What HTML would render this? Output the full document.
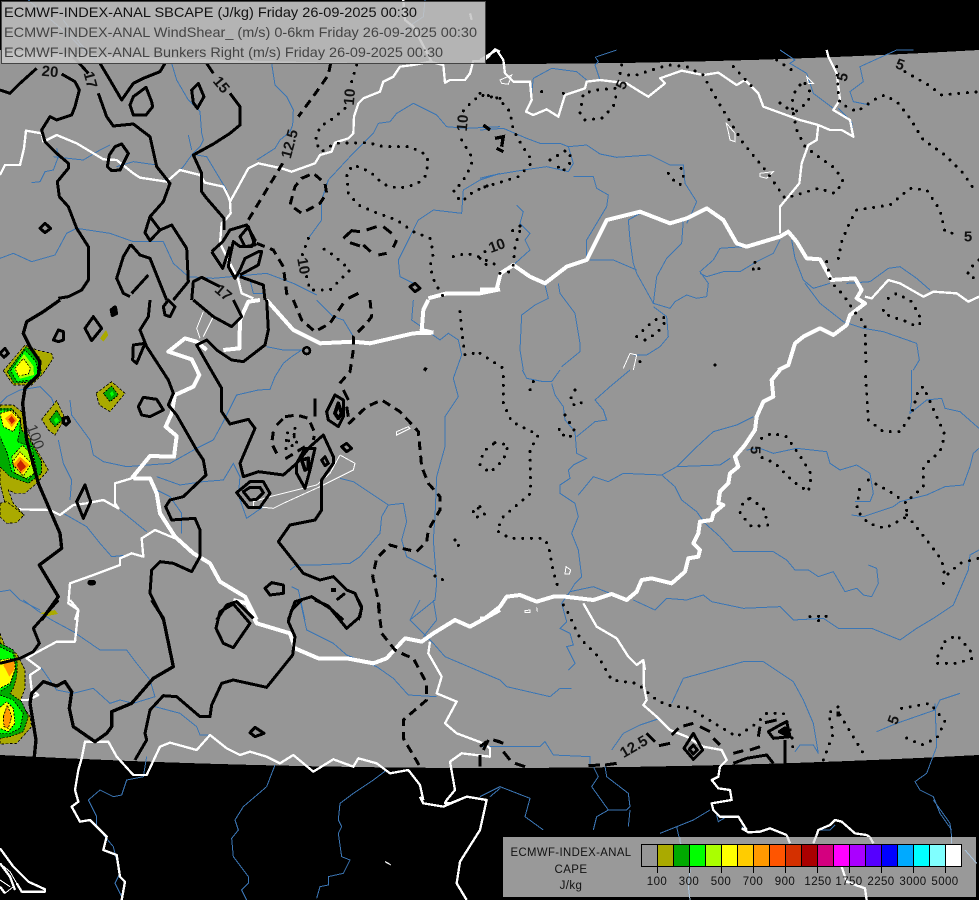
<!DOCTYPE html>
<html><head><meta charset="utf-8"><title>ECMWF CAPE</title>
<style>
html,body{margin:0;padding:0;background:#000;width:979px;height:900px;overflow:hidden}
svg{display:block;position:absolute;left:0;top:0}
path,polygon{fill:none}
.b path{stroke:#3b76b5;stroke-width:3}
.w path{stroke:#fff;stroke-width:7;stroke-linejoin:round}
.t path{stroke:#fff;stroke-width:12;stroke-linejoin:round}
.o path{stroke:#fff;stroke-width:3}
.k path{stroke:#000;stroke-width:9;stroke-linejoin:round}
.d path{stroke:#000;stroke-width:9;stroke-dasharray:26 17}
.p path{stroke:#000;stroke-width:9;stroke-linecap:round;stroke-dasharray:0 26}
.c path{stroke:#000;stroke-width:2.5;stroke-dasharray:6 4}
text{font-family:"Liberation Sans",sans-serif}
.l text{font-weight:bold;font-size:15px;fill:#111;text-anchor:middle;dominant-baseline:central}
</style></head><body>
<svg width="979" height="900" viewBox="0 0 979 900" shape-rendering="crispEdges">
<rect width="979" height="900" fill="#000"/>
<path d="M0,50Q490,78 979,50L979,755Q490,781 0,755Z" style="fill:#969696"/>

<g class="b">
<g transform="scale(.33333)">
<path d="M515,190L530,240 565,300 600,335 605,400 610,420 600,440 575,465 550,500 520,530"/>
<path d="M565,405L575,450"/>
<path d="M815,190L825,255 860,290 880,330 878,375 870,395 840,420 825,445 770,480"/>
<path d="M1500,380L1400,385 1340,380 1310,345 1240,310 1190,340 1170,365 1135,370 1120,400 1050,470 985,540 965,600 965,660 925,715"/>
<path d="M95,548L120,545 135,515 160,510 175,470 170,445"/>
<path d="M160,470L250,480 300,450 330,435"/>
<path d="M350,500L400,485 470,495 500,545"/>
<path d="M590,465L620,470 650,520 680,570"/>
<path d="M0,775L40,760 95,785 165,765 200,700 230,685 330,700 400,725 490,725 520,790 565,830 640,835 800,820 880,850 950,885"/>
<path d="M1500,520L1440,540 1390,570 1385,640 1300,630 1255,660 1230,710 1195,780 1200,830 1240,850"/>
<path d="M750,840L760,880 790,880"/>
<path d="M85,0L130,40 200,100 260,160M190,60L240,130 290,185M1275,0L1270,50 1240,70 1210,100"/>
</g>
<g transform="translate(0,300) scale(.33333)">
<path d="M210,300L215,345 270,420 280,465 310,485 380,500 510,490 590,445 640,420 670,365 710,285 775,270 810,268 825,230 850,190 875,170 905,150 850,150 800,140"/>
<path d="M0,310L20,290 60,270 120,260 155,295 175,345M175,420L190,490 215,540 210,600"/>
<path d="M190,640L260,680 300,730 335,770 385,765"/>
<path d="M0,875L30,870 60,900 120,930"/>
<path d="M360,630L440,695"/>
<path d="M470,530L540,555 610,545 670,540 700,490 720,530 715,585 740,655 790,620"/>
<path d="M1240,0L1235,60 1285,95 1320,120 1345,100 1375,120 1385,165 1360,235 1375,290 1335,350 1335,440 1310,530 1305,650 1300,720 1310,850 1305,900 1230,960"/>
<path d="M950,0L1000,50 1030,60 1060,110"/>
<path d="M1020,535L1060,545 1165,615 1145,650 1140,700 1080,770 1050,790 950,795 890,795 870,810"/>
<path d="M1165,615L1210,610 1220,665 1205,720 1220,770 1300,810"/>
<path d="M875,860L895,870 915,960"/>
<path d="M470,570L510,590 545,640 545,700"/>
</g>
<g transform="translate(480,50) scale(.33333)">
<path d="M155,130L160,85 215,55 290,65 320,90"/>
<path d="M345,20L355,35 345,45 360,90M350,20L410,0"/>
<path d="M900,0L945,30 930,40 980,70 1000,130 1060,175"/>
<path d="M1300,0L1250,0 1140,50 1150,95 1110,125 1120,155 1170,165"/>
<path d="M1075,175L1115,215 1120,255"/>
<path d="M0,385L40,375 130,360 200,350 265,365 280,340 265,290 320,285 360,312 410,322 510,315 570,345 610,345 615,400 650,455 635,490 620,520"/>
<path d="M0,240L70,235 140,265 180,280 240,280 265,290"/>
<path d="M280,380L340,380 350,415 385,435 380,470 320,570 320,630"/>
<path d="M110,465L130,485 120,520 150,550 135,570 150,600 100,645"/>
<path d="M610,510L605,580 560,625 530,680 520,760"/>
<path d="M480,490L445,510 450,570 460,640 470,670 520,760 570,775 585,755 620,735 650,745 680,740 685,700 660,665 700,630 720,595 790,590"/>
<path d="M330,630L400,630 470,660"/>
<path d="M900,570L880,610 830,635 780,665 730,665 680,680 660,670"/>
<path d="M935,570L945,625 970,690 1000,715 1050,700"/>
<path d="M975,700L1020,760 1090,815 1150,835 1210,845 1310,880 1318,930 1300,960"/>
<path d="M1100,700L1170,695 1225,655 1260,650 1310,685 1350,720"/>
<path d="M195,705L205,745 165,765 125,795 120,900 130,960"/>
<path d="M235,700L240,730 285,790 300,880 300,905 245,950"/>
<path d="M520,770L560,800 565,860 540,890 500,915 460,915"/>
</g>
<g transform="translate(480,370) scale(.33333)">
<path d="M127,0L140,25 190,35 215,35 240,0"/>
<path d="M215,40L225,75 250,110 255,150 285,185 290,250 320,265 280,285 265,300 270,325 240,345 240,370 285,400 295,440 275,490 295,540 305,620 285,640 270,665 245,700 260,755 240,775 270,790 280,825 260,830 285,880 265,900"/>
<path d="M450,0L390,50 345,90 370,120 380,150 345,155 290,200"/>
<path d="M295,375L340,320 385,335 430,310 545,315 585,350 605,390 650,425 675,460 720,500 760,545 880,545 920,570 945,600 985,600 1015,620 1060,605 1095,665 1130,655 1150,675 1175,680 1195,640 1190,595 1165,585"/>
<path d="M545,315L590,290 640,240 700,185 770,165 820,140"/>
<path d="M590,290L720,285 750,265"/>
<path d="M800,240L840,235 880,250 950,235 1040,245 1050,280 1080,300 1130,285 1170,310 1180,370 1170,395 1125,395"/>
<path d="M1295,0L1295,90 1290,130 1340,90 1385,85 1395,115 1440,125 1497,175"/>
<path d="M1115,435L1150,440 1240,410 1260,395 1340,375 1395,350 1450,345 1470,290 1480,250 1497,235"/>
<path d="M270,665L340,650 390,670"/>
<path d="M460,690L525,720 560,685 620,690 670,675 695,695 790,715 900,710 940,750 1030,745 1075,775 1175,775 1260,810 1310,775 1360,745 1420,705 1465,600 1470,555 1497,540"/>
</g>
<g transform="translate(0,600) scale(.33333)">
<path d="M70,0L110,30 155,60 220,95 300,150 380,150 410,190 450,240 465,290 400,310 360,300 330,310 280,265 220,280 170,270 125,205 85,225"/>
<path d="M465,320L540,340 590,380 600,405 630,405"/>
<path d="M900,0L920,90 1000,130 1040,165 1130,200 1180,235 1225,285 1310,290"/>
<path d="M1260,0L1230,60 1300,130 1335,170 1500,240M1300,0L1310,60 1270,110"/>
<path d="M440,470L430,530 380,540 365,585 340,590 300,570 265,600 290,650 290,680 340,740 360,820 345,850 365,890"/>
<path d="M825,495L800,560 730,620 705,660 715,690 695,715 700,770 745,830 745,850 725,870 740,900"/>
<path d="M1160,510L1120,540 1060,580 1020,610 1015,660 1025,680 1015,700 1025,770 1050,780 1030,820 985,830 985,855 960,860 950,895"/>
<path d="M1500,565L1470,590"/>
</g>
<g transform="translate(480,600) scale(.33333)">
<path d="M0,215L60,240 80,260 210,290 240,265 275,265"/>
<path d="M575,310L610,235 700,210 790,185 850,185 940,245 970,300 1000,370 1015,460 1000,435 960,435 945,455"/>
<path d="M395,450L430,400 480,375 540,355"/>
<path d="M1190,395L1250,370 1365,330 1380,300 1440,280"/>
<path d="M1365,310L1370,440 1340,520 1305,545 1320,570 1360,590 1380,640 1415,690"/>
<path d="M0,440L180,440 195,425 220,465 330,470 330,495"/>
<path d="M340,500L355,530 335,560 385,630 350,650 340,690"/>
<path d="M375,500L380,530 445,580 450,620 440,630 385,630"/>
<path d="M0,590L60,560 150,595 135,650 190,690"/>
<path d="M450,630L445,680"/>
</g>
<g transform="translate(660,800) scale(.33333)">
<path d="M0,100L50,80 100,60 150,30"/>
<path d="M170,45L175,65 200,50"/>
<path d="M50,80L60,125"/>
<path d="M245,80L265,97"/>
<path d="M480,90L510,90 525,75"/>
<path d="M820,0L870,70 875,110"/>
</g>
</g>

<g class="o">
<g transform="translate(0,300) scale(.33333)">
<path d="M1020,465L1065,490 1060,510 1000,540 960,560 850,610 820,625 770,620M1020,465L990,520 950,555 810,590 760,605 760,620"/>
<path d="M1190,395L1225,380 1230,385 1190,405Z"/>
<path d="M610,35L590,85 600,115M640,50L610,110"/>
</g>
<g transform="translate(480,50) scale(.33333)">
<path d="M738,218L765,250 765,275 750,270 745,245Z"/>
<path d="M840,370L880,365 860,385 840,380Z"/>
<path d="M60,90L95,75 85,103 65,100Z"/>
<path d="M980,80L1000,100 985,100Z"/>
<path d="M430,955L450,910 470,915 460,960"/>
</g>
<g transform="translate(480,370) scale(.33333)">
<path d="M258,590L272,600 268,612 255,612Z"/>
<path d="M135,722L150,720 150,727 135,727Z"/>
<path d="M170,712L172,725"/>
</g>
<g transform="translate(0,600) scale(.33333)">
<path d="M1155,785L1172,795 1165,790Z"/>
<path d="M0,790L30,815 50,850M0,840L30,860M15,880L40,860"/>
</g>
</g>

<g class="w">
<g transform="scale(.33333)">
<path d="M1500,155L1485,148 1465,170 1450,183 1420,183 1410,220 1395,240 1350,240 1335,248 1330,195 1290,185 1240,195 1200,200 1180,230 1150,245 1140,275 1090,295 1075,310 1062,350 1060,400 1045,415 1005,428 995,455 960,465 945,490 875,515 845,505 775,490 745,505 715,560 690,605 692,640 680,655 665,670 660,730"/>
<path d="M660,730L715,840 725,880 760,895"/>
<path d="M0,525L15,495 60,495 72,445 78,392 125,400 130,425 170,405 230,430 310,478 350,480 400,520 420,533 500,545 540,510 600,525 615,548 670,560 685,590 690,605"/>
<path d="M1210,0L1215,60 1240,80 1295,185" />
<path d="M1410,40L1415,60"/>
</g>
<g transform="translate(0,300) scale(.33333)">
<path d="M395,535L345,550 345,610 355,625 310,600 260,610 220,615 180,645 150,630 50,628 15,625 0,640"/>
<path d="M525,715L465,690 425,715 430,770 395,760 360,775 360,795 280,825 210,850 205,910 235,930 225,960"/>
</g>
<g transform="translate(480,50) scale(.33333)">
<path d="M0,30L50,0 70,30 75,70 100,95 150,95 155,150 138,185 160,195 200,178 235,200 255,135 315,115 320,95 360,90 440,100 480,125 505,140 555,100 540,85 605,62 670,75 715,68 770,105 795,90 835,130 850,170 905,190 960,210 1015,225 1050,240 1085,240 1120,260 1110,210 1060,180 1080,150 1070,70 1045,20 1040,0"/>
<path d="M1015,225L1010,270 985,285 965,340 958,400 900,470 900,550"/>
<path d="M1155,740L1175,745 1225,690 1260,700 1330,740 1360,725 1430,730 1465,755 1497,740"/>
</g>
<g transform="translate(480,370) scale(.33333)">
<path d="M310,700L350,770 410,805 445,860 470,885 490,870 495,900"/>
</g>
<g transform="translate(0,600) scale(.33333)">
<path d="M210,0L235,30 225,125 170,125 105,160 80,175 120,205 90,225 95,270 115,285 85,300 50,300 10,280 0,285"/>
<path d="M0,745L40,800 85,845 135,868 135,875 100,875 65,875 50,850M0,790L30,830 45,870M0,860L15,880"/>
<path d="M1290,125L1285,160 1325,230 1310,280 1370,305 1335,370 1370,400 1450,430 1470,445 1470,470 1385,460 1350,485 1365,570 1340,600 1335,610 1350,610 1400,590 1460,600 1440,690 1380,785 1370,850 1400,900"/>
<path d="M1260,590L1270,610 1330,620 1400,590"/>
<path d="M245,475L255,425 325,425 350,470 400,525 440,525 480,440 510,428 590,450 630,405 680,445 720,465 750,455 800,470 840,490 880,465 940,515 1000,478 1060,500 1075,475 1130,490 1170,520 1225,510 1260,555 1270,600"/>
<path d="M245,475L235,510 225,570 235,605 215,620 240,665 270,660 320,710 310,750 350,765 360,830 375,845 365,900"/>
</g>
<g transform="translate(480,600) scale(.33333)">
<path d="M490,180L492,260 500,300 490,315 530,350 570,390 620,410 670,440 725,450 740,480 720,500 715,530 695,540 715,565 750,570 755,600 695,610 700,630 720,650 775,650 800,690"/>
</g>
<g transform="translate(660,800) scale(.33333)">
<path d="M245,85L265,97 300,95 330,85 380,105"/>
<path d="M470,105L475,90 510,75 525,60 545,65 585,100 620,105 630,112"/>
</g>
</g>

<g class="t">
<g transform="scale(.33333)">
<path d="M1285,895L1340,880 1440,880 1500,868"/>
</g>
<g transform="translate(0,300) scale(.33333)">
<path d="M1300,98L1240,100 1110,130 1060,125 960,130 880,90 800,0"/>
<path d="M1300,98L1265,90 1270,30 1285,0"/>
<path d="M780,0L745,5 720,60 718,145 670,150"/>
<path d="M620,150L590,125 555,115 505,155 575,178 598,225 580,260 525,285 515,340 497,380 530,408 522,470 450,468 395,535"/>
<path d="M400,535L450,535 470,580 480,640 525,710 580,760 630,790 660,845 735,890 770,960"/>
</g>
<g transform="translate(480,50) scale(.33333)">
<path d="M0,718L50,718 62,670 100,645 150,680 195,700 260,650 320,630 350,570 380,510 480,485 570,520 620,505 680,475 730,510 770,580 800,590 900,560 925,545 950,575 980,625 1020,628 1055,690 1125,685 1145,720 1130,745 1155,760 1110,795 1100,825 1060,855 1020,835 970,860 945,880 925,945 895,960"/>
</g>
<g transform="translate(480,370) scale(.33333)">
<path d="M900,0L875,30 880,80 850,95 830,140 825,180 795,225 765,260 775,290 750,310 745,340 720,365 715,400 730,405 700,430 695,450 660,455 655,490 640,520 660,540 655,560 625,565 615,605 575,640 515,625 485,630 470,665 440,690 395,672 340,690 255,680 220,680 170,695 120,675 80,680 60,710 15,745 0,745"/>
</g>
<g transform="translate(0,600) scale(.33333)">
<path d="M700,0L740,10 770,70 870,100 885,145 955,175 1040,175 1120,190 1160,175 1215,115 1265,125 1300,100 1365,60 1410,80 1500,30"/>
</g>
</g>

<!-- CAPE patches -->
<g transform="translate(0,330) scale(.33333)" stroke-linejoin="round">
<polygon points="10,122 75,45 110,60 155,70 160,85 130,130 95,165 40,165" style="fill:#aaaa00;stroke:#000;stroke-width:2.5;stroke-dasharray:8 5"/>
<polygon points="22,125 78,50 118,82 124,130 102,155 42,160" style="fill:#00aa00"/>
<polygon points="32,122 75,60 108,95 115,130 95,150 50,155" style="fill:#00ff00"/>
<polygon points="42,118 72,72 100,108 102,135 60,146" style="fill:#aaff00"/>
<polygon points="45,115 70,85 92,115 85,132 55,138" style="fill:#ffff00"/>
<polygon points="0,225 40,225 65,245 75,290 95,335 125,385 145,420 110,460 75,490 45,490 25,480 40,520 72,555 50,575 20,580 5,545 15,520 0,460" style="fill:#aaaa00;stroke:#000;stroke-width:2.5;stroke-dasharray:8 5"/>
<polygon points="0,235 35,235 60,265 65,300 90,330 125,395 125,430 85,460 30,440 0,410" style="fill:#00aa00"/>
<polygon points="0,240 30,240 62,270 58,310 52,335 95,350 110,420 85,450 35,425 22,370 0,320" style="fill:#00ff00"/>
<polygon points="35,380 68,345 100,380 105,430 80,445 45,430" style="fill:#aaff00"/>
<polygon points="35,400 60,365 95,400 70,438" style="fill:#ffff00"/>
<polygon points="38,405 60,380 88,405 65,432" style="fill:#ff9900"/>
<polygon points="50,405 62,390 78,410 62,425" style="fill:#c82000"/>
<polygon points="0,250 35,240 62,265 40,305 10,290" style="fill:#ffff00"/>
<polygon points="15,265 35,250 52,270 35,292" style="fill:#ff9900"/>
<polygon points="25,268 35,258 45,272 35,282" style="fill:#c82000"/>
<polygon points="125,268 170,212 195,265 165,315 145,300" style="fill:#aaaa00;stroke:#000;stroke-width:2.5;stroke-dasharray:8 5"/>
<polygon points="148,270 170,240 188,270 165,290" style="fill:#00aa00"/>
<polygon points="162,270 170,262 178,272 168,282" style="fill:#00ff00"/>
<polygon points="288,190 335,155 375,190 330,245 298,225" style="fill:#aaaa00;stroke:#000;stroke-width:2.5;stroke-dasharray:8 5"/>
<polygon points="310,190 335,168 355,195 330,215" style="fill:#00aa00"/>
<polygon points="330,190 337,183 342,193 334,200" style="fill:#00ff00"/>
<polygon points="300,25 318,0 325,15 310,35" style="fill:#aaaa00"/>
<polygon points="0,520 20,515 40,530 72,555 50,578 20,580 0,560" style="fill:#aaaa00;stroke:#000;stroke-width:2.5;stroke-dasharray:8 5"/>
</g>
<g class="c" transform="translate(0,330) scale(.33333)">
<path d="M22,125L78,50 118,82 124,130 102,155 42,160Z"/>
<path d="M32,122L75,60 108,95 115,130 95,150 50,155Z"/>
<path d="M45,115L70,85 92,115 85,132 55,138Z"/>
<path d="M0,235L35,235 60,265 65,300 90,330 125,395 125,430 85,460 30,440 0,410"/>
<path d="M0,240L30,240 62,270 58,310 52,335 95,350 110,420 85,450 35,425 22,370 0,320"/>
<path d="M35,380L68,345 100,380 105,430 80,445 45,430Z"/>
<path d="M35,400L60,365 95,400 70,438Z"/>
<path d="M0,250L35,240 62,265 40,305 10,290Z"/>
<path d="M148,270L170,240 188,270 165,290Z"/>
<path d="M310,190L335,168 355,195 330,215Z"/>
</g>
<g transform="translate(0,620) scale(.33333)">
<polygon points="0,40 20,90 50,100 75,150 75,205 60,245 90,290 95,320 50,370 0,372" style="fill:#aaaa00;stroke:#000;stroke-width:2.5;stroke-dasharray:8 5"/>
<polygon points="0,70 40,90 52,130 50,170 40,205 30,220 65,245 85,290 70,335 30,350 0,355" style="fill:#00aa00"/>
<polygon points="0,80 40,100 47,145 30,195 0,215" style="fill:#00ff00"/>
<polygon points="0,225 40,240 70,280 60,325 30,340 0,340" style="fill:#00ff00"/>
<polygon points="0,120 30,115 45,125 45,150 30,190 0,205" style="fill:#ffff00"/>
<polygon points="20,120 45,115 42,150 28,170 10,135" style="fill:#ff9900"/>
<polygon points="0,262 20,245 40,265 45,310 25,335 0,325" style="fill:#ffff00"/>
<polygon points="10,290 22,255 35,290 25,325 12,320" style="fill:#ff9900"/>
</g>
<g class="c" transform="translate(0,620) scale(.33333)">
<path d="M0,70L40,90 52,130 50,170 40,205 30,220 65,245 85,290 70,335 30,350 0,355"/>
<path d="M0,80L40,100 47,145 30,195 0,215"/>
<path d="M0,225L40,240 70,280 60,325 30,340 0,340"/>
<path d="M0,120L30,115 45,125 45,150 30,190 0,205"/>
<path d="M0,262L20,245 40,265 45,310 25,335 0,325"/>
<path d="M10,290L22,255 35,290 25,325 12,320Z"/>
</g>
<polygon points="40,613 55,610 58,614 47,616" style="fill:#aaaa00"/>

<g class="k">
<g transform="scale(.33333)">
<path d="M0,270L30,280 60,250 110,205"/>
<path d="M185,222L225,245 238,270 225,320 215,345 170,360 150,350 125,390 135,425 170,460 205,490 205,505 172,545 178,590 205,620 230,685 265,740 265,840 245,870 205,890 175,895"/>
<path d="M220,170L265,220"/>
<path d="M295,280L320,350 340,378 400,372 450,410 470,500 510,550 490,605 450,650 480,690 515,675 560,745 565,845 520,900"/>
<path d="M450,650L435,698 450,722 480,690"/>
<path d="M392,733L370,770 350,835 370,880 390,890M392,733L420,765 450,775 480,850 500,900M445,825L395,880"/>
<path d="M300,190L330,240 365,300 400,250 430,235 480,215 495,190"/>
<path d="M400,290L438,262 455,305 458,320 438,345 400,345 390,315Z"/>
<path d="M575,270L595,250 612,290 592,325 580,308Z"/>
<path d="M345,440L365,432 385,460 360,510 335,512 322,500 328,465Z"/>
<path d="M620,190L640,220"/>
<path d="M690,280L720,320 720,375 690,400 640,432 580,465 605,520 605,575 620,595 672,655 672,690"/>
<path d="M635,755L668,725 690,690 740,675 765,720 755,740 720,740 700,725 690,770 685,800 705,835 720,810 735,775 775,755 785,755 775,795 720,825"/>
<path d="M720,710L745,680 765,735 735,740Z"/>
<path d="M635,755L668,805 690,740"/>
<path d="M720,830L790,855 795,900"/>
<path d="M120,685L135,670 152,685 135,698Z"/>
<path d="M575,900L580,845 605,832 660,860"/>
<path d="M1230,860L1245,850 1260,865 1245,875Z"/>
</g>
<g transform="translate(0,300) scale(.33333)">
<path style="stroke-width:10" d="M180,0L130,35 80,65 70,100 90,140 120,185 115,225 75,265 68,310 80,420 115,550 180,700 185,745 118,795 175,890 125,960"/>
<path d="M450,0L445,50 420,90 440,140 505,240 520,280 505,315 530,345 590,450 610,480 618,525 550,590 510,600 497,620 515,660 585,655 600,690 600,770 575,815 520,790 480,785 455,810 450,880 490,960"/>
<path d="M580,0L640,50 695,80 725,50 700,0"/>
<path d="M800,0L805,90 795,135 730,185 695,180 650,150 620,120 590,135 630,205 665,265 665,335 690,372 745,358 765,385 720,490 730,530 775,515 850,525 890,490 930,440 970,405 1000,470 1000,490 965,540 965,630 945,660 870,675 835,725 910,820 960,840 1000,830 1040,870 1065,880 1085,925 1075,960"/>
<path d="M650,960L680,915 710,905 760,955"/>
<path d="M865,960L885,905 935,890 990,925 1030,960"/>
<path d="M1035,880L1010,900"/>
<path d="M175,125L160,120 175,90 190,95 190,120Z"/>
<path d="M255,85L280,50 305,85 275,122Z"/>
<path d="M0,160L15,145 25,160 12,172Z"/>
<path d="M490,20L505,0 525,20 510,50 495,45Z"/>
<path d="M400,135L435,130 410,190 398,180Z"/>
<path d="M415,320L430,292 470,298 490,330 450,350 425,345Z"/>
<path d="M230,605L255,555 272,605 250,655Z"/>
<path d="M710,578L750,545 790,545 810,580 780,622 745,622Z"/>
<path d="M730,575L750,562 780,562 790,578 770,598 750,600Z"/>
<path d="M890,490L915,445 945,445 930,510 915,565 890,520Z"/>
<path style="stroke-width:11" d="M905,480L925,475 925,505 915,510Z"/>
<path d="M965,480L975,470 985,490 975,497Z"/>
<path d="M1025,440L1040,430 1055,445 1040,455Z"/>
<path d="M980,335L1005,285 1030,300 1030,350 1015,380 985,360Z"/>
<path style="stroke-width:11" d="M1005,340L1015,310 1025,340 1015,355Z"/>
<path d="M795,865L815,848 850,855 850,880 810,885Z"/>
<path style="stroke-width:10" d="M190,355L203,352 208,365 198,375 190,368Z"/>
<path style="stroke-width:12" d="M335,30L345,22 348,40 338,45Z"/>
<path style="stroke-width:13" d="M993,870L1008,870"/>
<path style="stroke-width:8" d="M910,152a10,10 0 1 0 20,0a10,10 0 1 0 -20,0"/>
<path style="stroke-width:16;stroke-linecap:round" d="M270,848L280,848"/>
<path style="stroke-width:11" d="M1272,205L1280,210"/>
</g>
<g transform="translate(0,600) scale(.33333)">
<path d="M175,0L100,85 118,130 100,155 60,175 0,190"/>
<path style="stroke-width:10" d="M455,0L490,55 520,200 460,235 395,310 335,335 335,380 320,400 285,425 220,380 208,325 215,275 195,245 170,258 130,245 95,280 90,310 108,420 103,470"/>
<path d="M700,12L660,35 648,85 670,130 700,143 750,70Z"/>
<path d="M905,0L875,30 865,65 885,110 878,165 800,262 700,240 665,250 635,315 630,350 600,350 530,290 490,287 450,330 435,400 440,420 405,480"/>
<path d="M945,0L985,18 1040,85 1080,50 1085,20 1075,0"/>
<path d="M750,398L765,382 792,400 765,410Z"/>
<path d="M1440,500L1440,465"/>
</g>
<g transform="translate(480,600) scale(.33333)">
<path d="M612,445L640,400 668,450 640,478Z"/>
<path d="M628,448L640,435 652,450 640,462Z"/>
<path d="M865,395L900,375 920,365 930,410 880,415Z"/>
<path style="stroke-width:12" d="M900,395L915,385 918,403Z"/>
<path d="M915,420L915,490"/>
<path d="M760,490L800,475 860,465 880,490"/>
<path style="stroke-width:14" d="M1070,342L1080,342"/>
</g>
</g>

<g class="d">
<g transform="scale(.33333)">
<path d="M992,190L985,225 950,275 895,350"/>
<path d="M848,490L745,660"/>
<path d="M770,730L820,750 850,800 860,880 870,900"/>
<path d="M905,535L940,520 975,550 980,580 960,610 905,640 870,615 885,560Z"/>
<path d="M1030,715L1055,692 1080,695M1100,690L1130,680M1150,680L1175,700M1190,720L1180,742M1160,760L1135,765M1112,755L1090,735M1080,738L1050,728" style="stroke-dasharray:none"/>
<path d="M1045,895L1075,880" style="stroke-dasharray:none"/>
</g>
<g transform="translate(0,300) scale(.33333)">
<path d="M1110,0L1115,50 1100,70 1060,110 1060,150 1050,215 1015,255"/>
<path d="M880,0L905,60 945,95 990,70 1030,10"/>
<path d="M945,295L945,350M1030,270L1045,300M1040,320L1045,350" style="stroke-dasharray:none"/>
<path d="M1045,372L1100,320 1145,300 1200,335 1240,378 1255,395 1265,500 1285,550 1320,590 1320,630 1285,690 1280,725 1250,755 1205,745 1170,735 1130,775 1118,830 1135,900 1140,950"/>
<path d="M855,350L890,345 925,355 945,400 940,420M915,440L850,480M830,460L815,430 820,395M830,375L855,350"/>
</g>
<g transform="translate(480,50) scale(.33333)">
<path d="M10,225L30,240M45,265L70,260 65,290M50,295L70,305" style="stroke-dasharray:none;stroke-width:10"/>
</g>
<g transform="translate(0,600) scale(.33333)">
<path d="M1135,15L1145,100 1185,150 1215,165 1240,175 1280,250 1280,300 1210,360 1210,415 1260,500"/>
<path d="M1450,450L1465,420M1480,420L1500,425" style="stroke-dasharray:none"/>
</g>
<g transform="translate(480,600) scale(.33333)" >
<path style="stroke-dasharray:none" d="M0,440L20,425M40,420L70,430M70,455L90,480M105,490L135,500M325,497L360,495M375,495L410,490M500,400L525,425M537,437L570,430M575,405L595,385M610,378L640,370M660,380L690,395M700,415L720,435M760,460L790,452M810,450L840,440M835,410L840,380M855,368L890,360"/>
</g>
</g>

<g class="p">
<g transform="scale(.33333)">
<path d="M1070,195L1055,245"/>
<path d="M1035,325L1000,355 960,380 945,425 965,455 1005,430 1105,428 1150,440 1230,440 1280,465 1285,490 1275,530 1250,553 1195,565 1150,553 1110,515 1060,495 1040,520 1045,580 1075,615 1120,635 1190,660 1240,695 1290,715 1300,760 1290,800 1305,850 1330,890"/>
<path d="M1500,295L1440,285 1395,325 1385,340"/>
<path d="M1385,420L1415,470 1415,495 1385,550 1360,570 1370,590 1385,605 1420,575 1480,550"/>
<path d="M925,715L905,770"/>
<path d="M920,830L930,870 990,870 1050,810 1000,765 960,740"/>
<path d="M1360,770L1400,760 1435,770 1500,800"/>
</g>
<g transform="translate(0,300) scale(.33333)">
<path d="M885,385L860,400 895,405 850,425 880,420 895,430 855,445 880,450"/>
<path d="M1380,35L1385,90 1390,130 1395,165 1420,160 1440,165"/>
<path d="M1365,720L1380,735 1360,740"/>
<path d="M1305,828L1325,840 1345,830"/>
<path d="M1420,635L1435,620 1432,655"/>
</g>
<g transform="translate(480,50) scale(.33333)">
<path d="M0,130L55,145 90,185 100,240 125,285 155,330 150,345 115,380 50,400 10,412"/>
<path d="M210,330L260,300 275,325 265,350 245,365 230,345"/>
<path d="M425,45L420,70 460,78 515,60 565,45 620,50 670,75 680,95 720,165 790,280 860,365 915,445 1015,415 1065,430 1090,395 1065,355 1015,320 975,290 950,240 940,190 905,160 880,155"/>
<path d="M760,50L830,125"/>
<path d="M890,30L935,60"/>
<path d="M960,105L945,125 935,160 940,190 985,155 990,125 975,100"/>
<path d="M185,125L180,150M250,130L245,150"/>
<path d="M405,115L350,120 310,130 300,190 315,210 365,205 400,170 410,130"/>
<path d="M1070,50L1075,130 1080,160 1130,185 1190,145 1215,135 1255,160 1290,205 1330,270 1395,315 1450,370 1480,415"/>
<path d="M1275,65L1345,105 1385,135 1440,130 1497,125"/>
<path d="M1075,625L1085,575 1110,515 1130,480 1230,465 1290,415 1340,420 1380,480 1395,545 1440,555"/>
<path d="M1040,635L1052,695 1090,735 1120,780 1135,800 1155,820 1158,950"/>
<path d="M1497,630L1470,655 1462,675 1495,690"/>
<path d="M60,670L90,665 100,645 105,590 125,525 100,540 80,560"/>
<path d="M0,625L35,660M15,605L30,598"/>
<path d="M565,370L580,390 600,405 610,380 605,355 580,360"/>
<path d="M470,860L500,830 540,800 560,805 550,825 530,850 495,870 520,875"/>
<path d="M0,910L70,955"/>
<path d="M480,935L495,945M705,945L706,946"/>
<path d="M825,637L815,655 835,665 838,648"/>
<path d="M1225,745L1250,730 1295,755 1315,790 1325,815 1310,830 1280,815 1235,800 1210,790 1210,770"/>
</g>
<g transform="translate(480,370) scale(.33333)">
<path d="M70,20L70,100 95,155 175,195 150,240 152,370 70,440 50,482 90,505 190,505 205,525 220,605 235,655"/>
<path d="M0,410L15,435"/>
<path d="M45,218L85,225 70,270 30,308 0,285 10,245Z"/>
<path d="M160,35L150,60 165,60"/>
<path d="M285,60L270,90 285,108 310,95 310,78"/>
<path d="M255,135L270,160 285,185 265,205 235,185 245,160"/>
<path d="M1157,20L1165,150 1210,185 1260,185 1290,140 1300,115 1315,60 1330,50 1350,95 1395,195 1380,245 1345,275 1330,295 1330,350 1280,395"/>
<path d="M845,205L875,190 920,200 965,265 995,315 985,365 940,335 885,280 840,260"/>
<path d="M810,385L850,415 865,465 815,470 780,430 790,395Z"/>
<path d="M1165,330L1230,365 1280,400 1280,440 1215,475 1165,460 1130,420 1140,345"/>
<path d="M1280,435L1340,510 1385,570 1395,620 1440,580 1495,565"/>
<path d="M1390,640L1395,620"/>
</g>
<g transform="translate(480,600) scale(.33333)">
<path d="M250,15L265,40 300,115 355,170 395,240 470,250 530,300 560,315 630,325 720,380 770,410 830,370 860,340 910,340 935,400 940,465"/>
<path d="M1030,480L1060,400 1045,340 1075,320 1080,345 1150,460"/>
<path d="M1265,325L1350,310 1395,365 1370,415 1325,435 1260,405"/>
<path d="M1395,125L1430,105 1470,150 1478,175 1430,190 1370,190 1370,175Z"/>
<path d="M990,50L1040,48 1010,65"/>
</g>
</g>

<g class="l">
<text transform="translate(50,72) rotate(5)">20</text>
<text transform="translate(90,80) rotate(75)">17</text>
<text transform="translate(221,85) rotate(50)">15</text>
<text transform="translate(290,144) rotate(-75)">12.5</text>
<text transform="translate(350,97) rotate(-85)">10</text>
<text transform="translate(463,123) rotate(-85)">10</text>
<text transform="translate(303,266) rotate(80)">10</text>
<text transform="translate(497,246) rotate(-20)">10</text>
<text transform="translate(223,293) rotate(40)">17</text>
<text transform="translate(622,85) rotate(-65)">5</text>
<text transform="translate(843,77) rotate(-75)">5</text>
<text transform="translate(900,65) rotate(20)">5</text>
<text transform="translate(968,237)">5</text>
<text transform="translate(755,450) rotate(90)">5</text>
<text transform="translate(634,747) rotate(-30)">12.5</text>
<text transform="translate(894,720) rotate(-70)">5</text>
<text transform="translate(35,437) rotate(70)" style="font-weight:normal;fill:#333">100</text>
</g>

<!-- top legend -->
<rect x="1.5" y="1.5" width="484" height="62" fill="#c8c8c8" fill-opacity=".9" stroke="#444" stroke-width="1"/>
<g shape-rendering="auto" font-size="14">
<text x="4" y="17" fill="#111" textLength="413" lengthAdjust="spacingAndGlyphs">ECMWF-INDEX-ANAL SBCAPE (J/kg) Friday 26-09-2025 00:30</text>
<text x="4" y="37" fill="#444" textLength="473" lengthAdjust="spacingAndGlyphs">ECMWF-INDEX-ANAL WindShear_ (m/s) 0-6km Friday 26-09-2025 00:30</text>
<text x="4" y="57" fill="#444" textLength="439" lengthAdjust="spacingAndGlyphs">ECMWF-INDEX-ANAL Bunkers Right (m/s) Friday 26-09-2025 00:30</text>
</g>

<!-- bottom legend -->
<rect x="503" y="837" width="473" height="60" fill="#999"/>
<g transform="translate(660,800) scale(.33333)" style="fill:none">
<path d="M60,112L60,125 90,210 85,260 90,300" style="stroke:#a8c4de;stroke-width:3"/>
<path d="M875,110L875,130" style="stroke:#a8c4de;stroke-width:3"/>
<path d="M915,150L950,190" style="stroke:#a8c4de;stroke-width:3"/>
<path d="M560,240L590,260" style="stroke:#a8c4de;stroke-width:3"/>
<path d="M380,105L390,130" style="stroke:#e8e8e8;stroke-width:7"/>
<path d="M470,105L460,130" style="stroke:#e8e8e8;stroke-width:7"/>
<path d="M630,112L640,130" style="stroke:#e8e8e8;stroke-width:7"/>
<path d="M545,200L560,245 615,265 620,300" style="stroke:#fff;stroke-width:7"/>
</g>
<g stroke="#000" stroke-width="1">
<rect x="641.5" y="844.5" width="16" height="22" fill="#969696"/>
<rect x="657.5" y="844.5" width="16" height="22" fill="#aaaa00"/>
<rect x="673.5" y="844.5" width="16" height="22" fill="#00aa00"/>
<rect x="689.5" y="844.5" width="16" height="22" fill="#00ff00"/>
<rect x="705.5" y="844.5" width="16" height="22" fill="#aaff00"/>
<rect x="721.5" y="844.5" width="16" height="22" fill="#ffff00"/>
<rect x="737.5" y="844.5" width="16" height="22" fill="#ffcc00"/>
<rect x="753.5" y="844.5" width="16" height="22" fill="#ff9900"/>
<rect x="769.5" y="844.5" width="16" height="22" fill="#ff5500"/>
<rect x="785.5" y="844.5" width="16" height="22" fill="#d43000"/>
<rect x="801.5" y="844.5" width="16" height="22" fill="#aa0000"/>
<rect x="817.5" y="844.5" width="16" height="22" fill="#d4007f"/>
<rect x="833.5" y="844.5" width="16" height="22" fill="#ff00ff"/>
<rect x="849.5" y="844.5" width="16" height="22" fill="#aa00ff"/>
<rect x="865.5" y="844.5" width="16" height="22" fill="#5500ff"/>
<rect x="881.5" y="844.5" width="16" height="22" fill="#0000ff"/>
<rect x="897.5" y="844.5" width="16" height="22" fill="#00aaff"/>
<rect x="913.5" y="844.5" width="16" height="22" fill="#00ffff"/>
<rect x="929.5" y="844.5" width="16" height="22" fill="#80ffff"/>
<rect x="945.5" y="844.5" width="16" height="22" fill="#ffffff"/>
<path d="M657.5,866V873M689.5,866V873M721.5,866V873M753.5,866V873M785.5,866V873M817.5,866V873M849.5,866V873M881.5,866V873M913.5,866V873M945.5,866V873"/>
</g>
<g shape-rendering="auto" font-size="11.5" fill="#111" text-anchor="middle" letter-spacing=".4">
<text x="571" y="856" textLength="121" lengthAdjust="spacingAndGlyphs">ECMWF-INDEX-ANAL</text>
<text x="571" y="873">CAPE</text>
<text x="571" y="889">J/kg</text>
<text x="657" y="885">100</text>
<text x="689" y="885">300</text>
<text x="721" y="885">500</text>
<text x="753" y="885">700</text>
<text x="785" y="885">900</text>
<text x="818" y="885">1250</text>
<text x="849" y="885">1750</text>
<text x="881" y="885">2250</text>
<text x="913" y="885">3000</text>
<text x="945" y="885">5000</text>
</g>
</svg>
</body></html>
